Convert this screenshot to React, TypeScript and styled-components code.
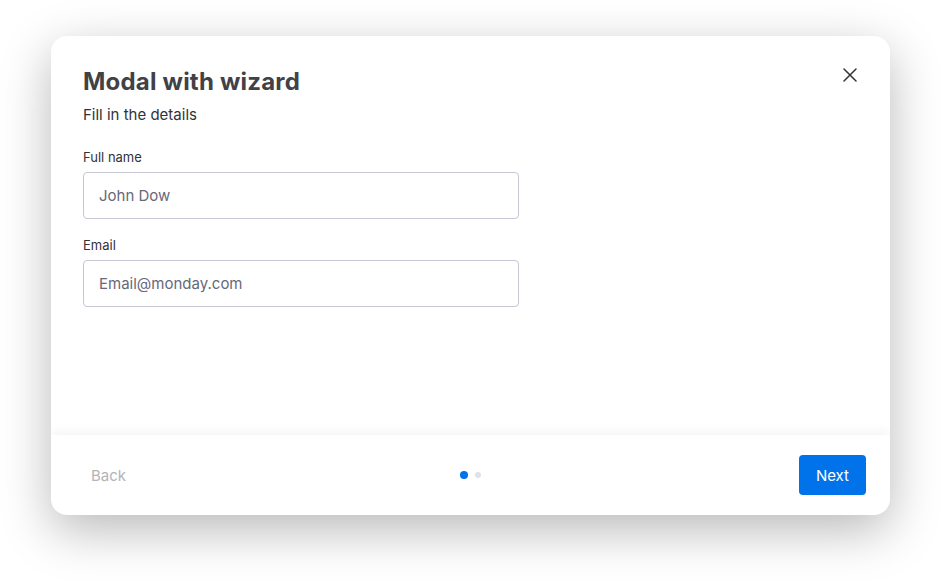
import React from "react";
import styled, { createGlobalStyle } from "styled-components";

const Global = createGlobalStyle`
  html, body { margin: 0; padding: 0; background: #ffffff; }
  body { font-family: "Inter", "Roboto", sans-serif; color: #323338; }
  * { box-sizing: border-box; }
`;

const Page = styled.div`
  width: 941px;
  height: 581px;
  padding: 36px 0 0 51px;
  background: #ffffff;
`;

const Modal = styled.div`
  width: 839px;
  height: 479px;
  background: #ffffff;
  border-radius: 16px;
  box-shadow: 0 15px 50px rgba(0, 0, 0, 0.28);
  display: flex;
  flex-direction: column;
  overflow: hidden;
`;

const Header = styled.div`
  display: flex;
  justify-content: space-between;
  align-items: flex-start;
  padding: 30px 24px 0 32px;
`;

const TitleBlock = styled.div`
  display: flex;
  flex-direction: column;
  gap: 6px;
`;

const Title = styled.h1`
  margin: 0;
  font-family: "Inter", sans-serif;
  font-size: 24px;
  line-height: 32px;
  font-weight: 700;
  letter-spacing: 0.2px;
  color: #414146;
`;

const Subtitle = styled.p`
  margin: 0;
  font-size: 15px;
  line-height: 22px;
  color: #323338;
`;

const CloseButton = styled.button`
  width: 32px;
  height: 32px;
  margin-top: -7px;
  border: none;
  background: transparent;
  display: flex;
  align-items: center;
  justify-content: center;
  padding: 0;
  cursor: pointer;
`;

const Body = styled.div`
  flex: 1;
  padding: 21px 32px 0 32px;
  display: flex;
  flex-direction: column;
  gap: 16px;
`;

const Field = styled.div`
  display: flex;
  flex-direction: column;
  gap: 5px;
  width: 436px;
`;

const Label = styled.label`
  font-size: 13px;
  line-height: 20px;
  color: #323338;
`;

const Input = styled.input`
  height: 47px;
  width: 100%;
  border: 1px solid #c5c7d4;
  border-radius: 4px;
  padding: 0 15px;
  font-family: "Inter", sans-serif;
  font-size: 15px;
  color: #323338;
  outline: none;
  &::placeholder { color: #676879; }
`;

const Footer = styled.div`
  height: 80px;
  display: grid;
  grid-template-columns: 1fr auto 1fr;
  align-items: center;
  padding: 0 24px;
  box-shadow: 0 -4px 10px rgba(0, 0, 0, 0.045);
`;

const BackButton = styled.button`
  justify-self: start;
  height: 40px;
  padding: 0 16px;
  border: none;
  background: transparent;
  font-family: "Inter", sans-serif;
  font-size: 15px;
  color: #b3b3b8;
`;

const Dots = styled.div`
  display: flex;
  align-items: center;
  gap: 7px;
`;

const Dot = styled.span<{ $active?: boolean }>`
  width: ${(p) => (p.$active ? 8 : 6)}px;
  height: ${(p) => (p.$active ? 8 : 6)}px;
  border-radius: 50%;
  background: ${(p) => (p.$active ? "#0073ea" : "#dfe2ec")};
`;

const NextButton = styled.button`
  justify-self: end;
  height: 40px;
  padding: 0 17px;
  border: none;
  border-radius: 4px;
  background: #0073ea;
  color: #ffffff;
  font-family: "Inter", sans-serif;
  font-size: 15px;
`;

export default function App() {
  return (
    <>
      <Global />
      <Page>
        <Modal>
          <Header>
            <TitleBlock>
              <Title>Modal with wizard</Title>
              <Subtitle>Fill in the details</Subtitle>
            </TitleBlock>
            <CloseButton aria-label="Close">
              <svg width="14" height="14" viewBox="0 0 14 14">
                <path d="M1 1 L13 13 M13 1 L1 13" stroke="#323338" strokeWidth="1.5" strokeLinecap="round" />
              </svg>
            </CloseButton>
          </Header>
          <Body>
            <Field>
              <Label>Full name</Label>
              <Input placeholder="John Dow" />
            </Field>
            <Field>
              <Label>Email</Label>
              <Input placeholder="Email@monday.com" />
            </Field>
          </Body>
          <Footer>
            <BackButton>Back</BackButton>
            <Dots>
              <Dot $active />
              <Dot />
            </Dots>
            <NextButton>Next</NextButton>
          </Footer>
        </Modal>
      </Page>
    </>
  );
}
